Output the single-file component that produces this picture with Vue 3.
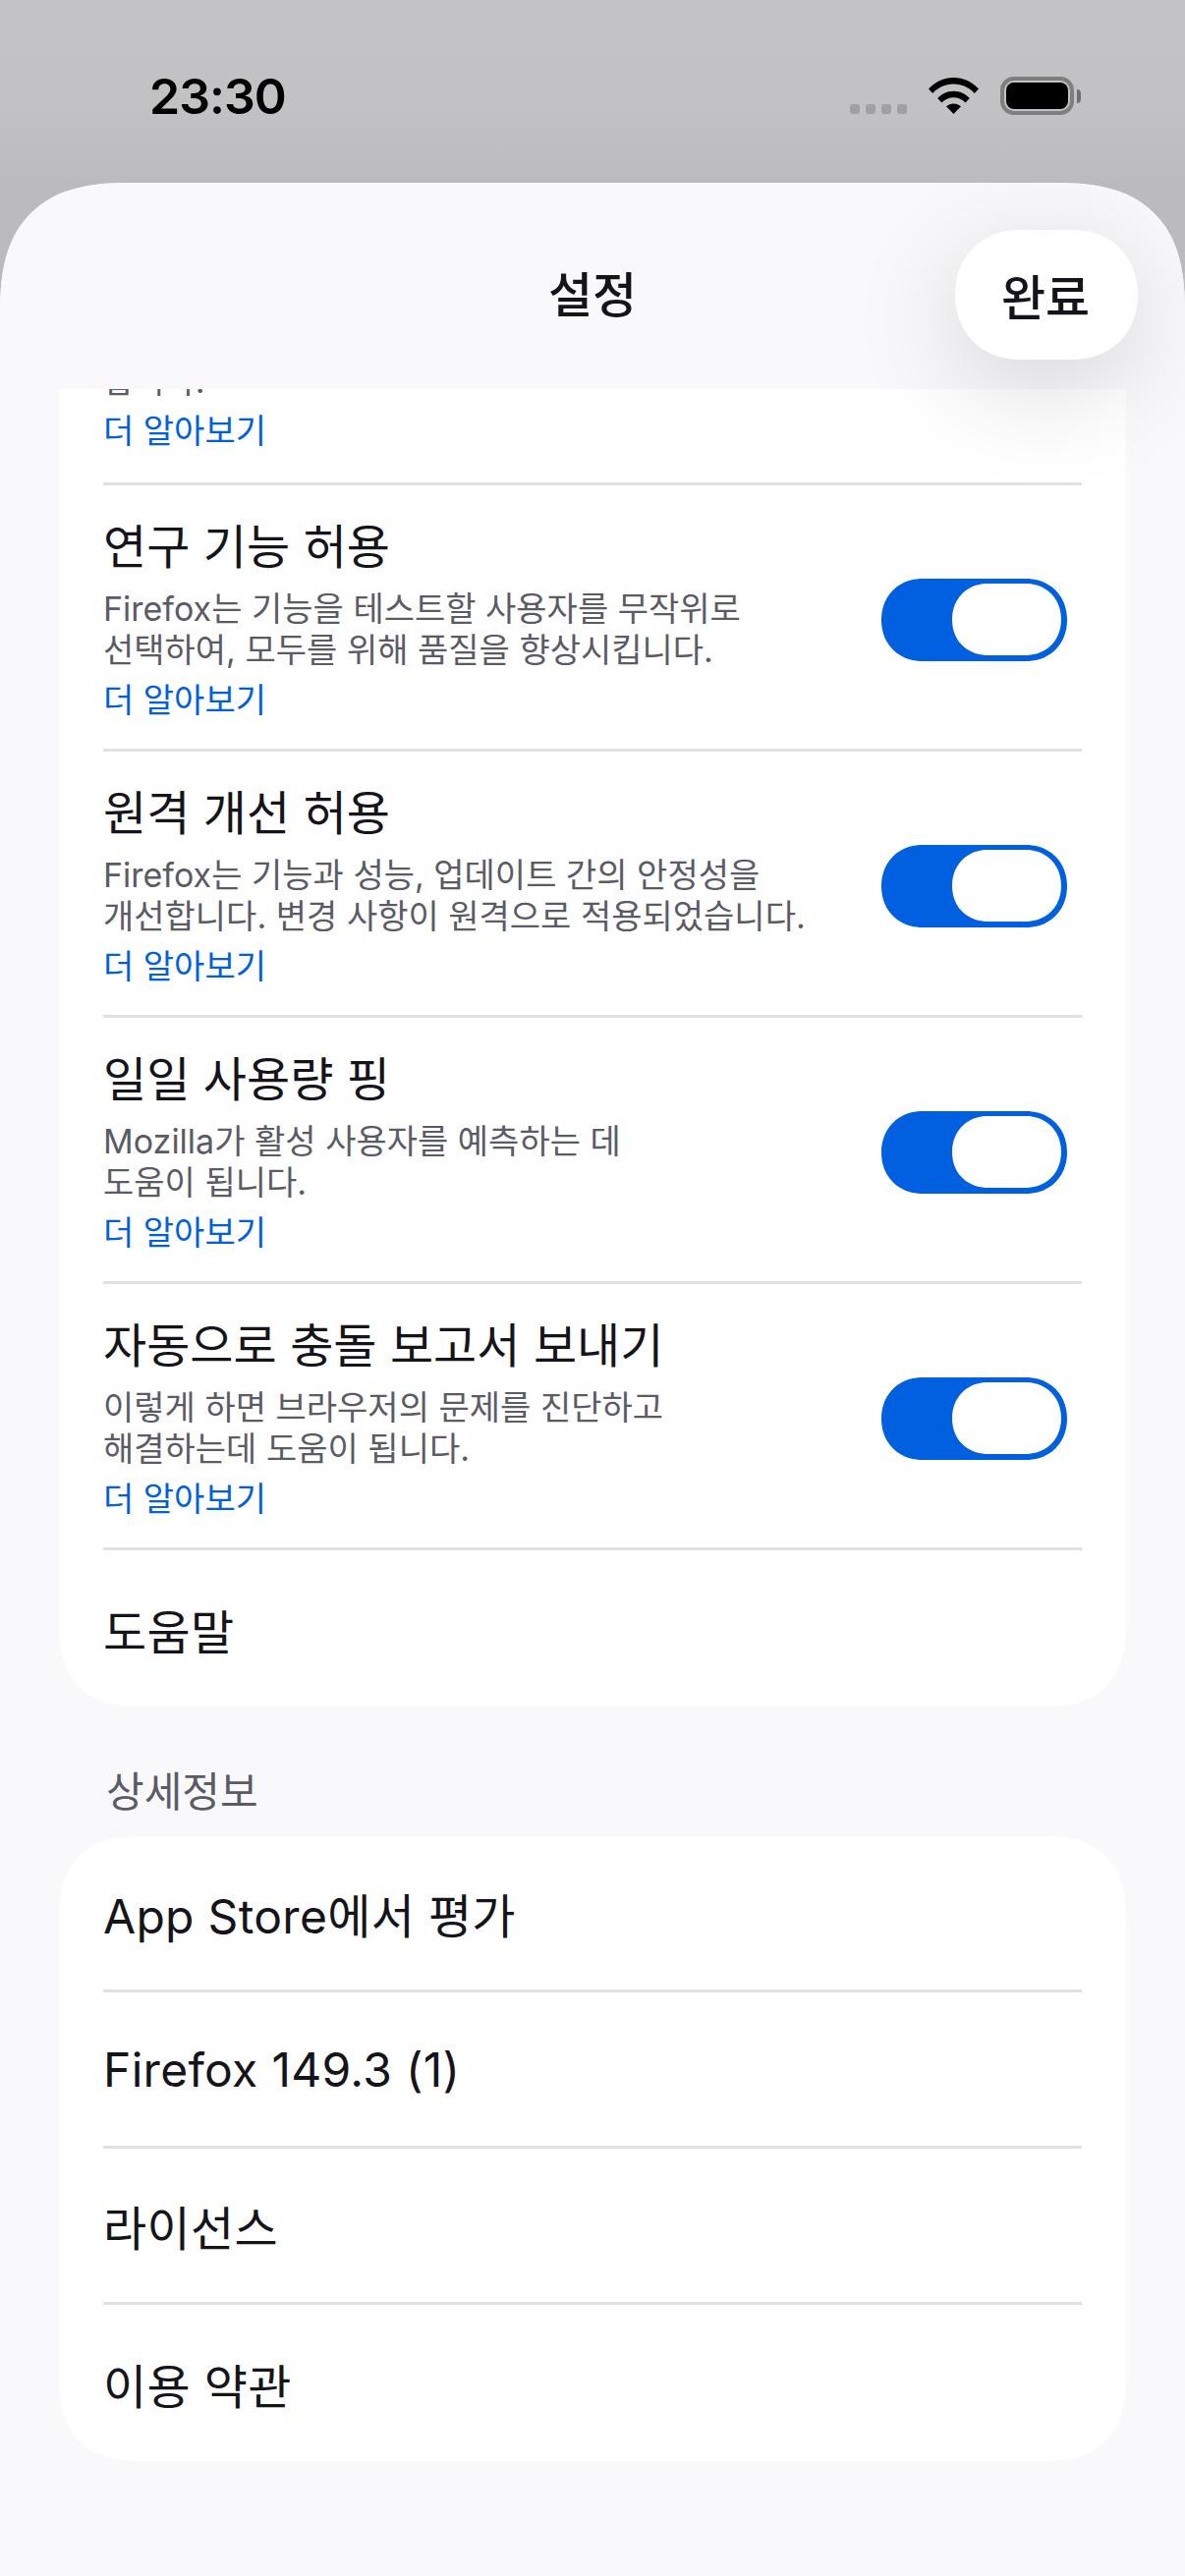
<script setup>
const toggleRows = [
  { title: '연구 기능 허용', desc: 'Firefox는 기능을 테스트할 사용자를 무작위로\n선택하여, 모두를 위해 품질을 향상시킵니다.' },
  { title: '원격 개선 허용', desc: 'Firefox는 기능과 성능, 업데이트 간의 안정성을\n개선합니다. 변경 사항이 원격으로 적용되었습니다.' },
  { title: '일일 사용량 핑', desc: 'Mozilla가 활성 사용자를 예측하는 데\n도움이 됩니다.' },
  { title: '자동으로 충돌 보고서 보내기', desc: '이렇게 하면 브라우저의 문제를 진단하고\n해결하는데 도움이 됩니다.' },
];
const aboutRows = ['App Store에서 평가', 'Firefox 149.3 (1)', '라이선스', '이용 약관'];
</script>

<template>
  <div class="screen">
    <div class="status">
      <span class="time">23:30</span>
      <div class="status-icons">
        <div class="dots"><i></i><i></i><i></i><i></i></div>
        <svg class="wifi" width="51" height="37" viewBox="0 0 51 37">
          <path d="M0 11.5C6.5 4.3 15.5 0 25.5 0S44.500 4.300 51 11.500L46.800 16C41.400 10.200 33.900 6.600 25.500 6.600S9.600 10.200 4.200 16Z" />
          <path d="M9.200 21C13.400 16.500 19.100 13.700 25.500 13.700S37.600 16.500 41.800 21L37.600 25.500C34.400 22.200 30.200 20.200 25.500 20.200S16.600 22.200 13.400 25.500Z" />
          <path d="M18 29.300C20 27.500 22.600 26.400 25.500 26.400S31 27.500 33 29.300L25.500 37Z" />
        </svg>
        <div class="battery">
          <div class="battery-body"><div class="battery-fill"></div></div>
          <div class="battery-nub"></div>
        </div>
      </div>
    </div>

    <div class="sheet">
      <header class="nav">
        <h1>설정</h1>
        <button class="done">완료</button>
      </header>

      <div class="scroll">
        <section class="card first">
          <div class="row">
            <div class="row-text">
              <p class="desc">합니다.</p>
              <a class="more">더 알아보기</a>
            </div>
          </div>
          <div v-for="item in toggleRows" :key="item.title" class="row">
            <div class="row-text">
              <div class="title">{{ item.title }}</div>
              <p class="desc">{{ item.desc }}</p>
              <a class="more">더 알아보기</a>
            </div>
            <div class="toggle"><div class="knob"></div></div>
          </div>
          <div class="row plain">도움말</div>
        </section>

        <h2 class="section-title">상세정보</h2>
        <section class="card">
          <div v-for="label in aboutRows" :key="label" class="row plain">{{ label }}</div>
        </section>
      </div>
    </div>
  </div>
</template>

<style>
html, body {
  margin: 0;
  background: #f9f9fb;
}
</style>

<style scoped>
.screen {
  width: 1206px;
  height: 2622px;
  overflow: hidden;
  display: flex;
  flex-direction: column;
  background: linear-gradient(#c3c3c5 0, #c2c2c4 110px, #bbbbbd 186px);
  font-family: Inter, "Noto Sans CJK KR", sans-serif;
  color: #15141a;
}

.status {
  height: 186px;
  flex-shrink: 0;
  display: flex;
  justify-content: space-between;
  align-items: flex-start;
  padding: 0 106px 0 152px;
  box-sizing: border-box;
}
.time {
  margin-top: 68px;
  font-size: 50px;
  line-height: 60px;
  font-weight: 600;
  letter-spacing: -1px;
  color: #000;
}
.status-icons {
  display: flex;
  align-items: flex-start;
  margin-top: 78px;
}
.dots {
  display: flex;
  gap: 6px;
  margin: 28px 22px 0 0;
}
.dots i {
  display: block;
  width: 10px;
  height: 10px;
  border-radius: 3px;
  background: #a0a0a2;
}
.wifi {
  margin: 1px 22px 0 0;
  fill: #000;
}
.battery {
  display: flex;
  align-items: center;
}
.battery-body {
  width: 75px;
  height: 39px;
  box-sizing: border-box;
  border: 4px solid #7f7f81;
  border-radius: 14px;
  padding: 2px;
}
.battery-fill {
  height: 100%;
  background: #000;
  border-radius: 8px;
}
.battery-nub {
  width: 4px;
  height: 14px;
  margin-left: 3px;
  background: #6f6f71;
  border-radius: 0 7px 7px 0;
}

.sheet {
  flex: 1;
  min-height: 0;
  display: flex;
  flex-direction: column;
  background: #f9f9fb;
  border-radius: 135px 135px 0 0;
  corner-shape: superellipse(1.4);
  overflow: hidden;
}
.nav {
  position: relative;
  z-index: 1;
  height: 210px;
  flex-shrink: 0;
  background: #f9f9fb;
  display: flex;
  align-items: center;
  justify-content: center;
}
h1 {
  margin: 20px 0 0;
  font-size: 49px;
  line-height: 60px;
  font-weight: 500;
}
.done {
  position: absolute;
  top: 48px;
  right: 48px;
  width: 186px;
  height: 132px;
  padding: 0 2px 2px 0;
  border: none;
  border-radius: 66px;
  corner-shape: superellipse(1.08);
  background: #fff;
  color: #15141a;
  font: 500 49px Inter, "Noto Sans CJK KR", sans-serif;
  box-shadow: 0 26px 110px rgba(0, 0, 0, 0.15);
}

.scroll {
  padding: 0 60px;
  min-height: 0;
}
.card {
  background: #fff;
  border-radius: 88px;
  corner-shape: superellipse(1.4);
}
/* scrolled: the top of this card is already under the nav */
.card.first {
  margin-top: -200px;
  padding-top: 171px;
}
.row {
  display: flex;
  align-items: center;
  margin: 0 45px;
  padding-right: 15px;
  border-bottom: 3px solid #e0e0e6;
}
.row:last-child {
  border-bottom: none;
}
.row-text {
  flex: 1;
  padding: 37px 0 28px;
}
.card.first .row:first-child .row-text {
  padding: 0 0 31px;
}
.title {
  font-size: 48px;
  line-height: 52px;
  margin-bottom: 16px;
}
.desc {
  margin: 0;
  font-size: 34px;
  line-height: 42px;
  color: #5b5b66;
  white-space: pre-line;
}
.more {
  display: block;
  margin-top: 9px;
  font-size: 34px;
  line-height: 42px;
  color: #0060df;
}
.toggle {
  width: 189px;
  height: 84px;
  margin-top: 6px;
  box-sizing: border-box;
  padding: 5px 6px 6px;
  display: flex;
  justify-content: flex-end;
  background: #0060df;
  border-radius: 42px;
  corner-shape: superellipse(1.08);
}
.knob {
  width: 111px;
  height: 73px;
  background: #fff;
  border-radius: 37px;
  corner-shape: superellipse(1.08);
}
.plain {
  height: 159px;
  box-sizing: border-box;
  font-size: 48px;
  letter-spacing: 0.3px;
}
.section-title {
  margin: 0;
  padding: 63px 0 21px 48px;
  font-size: 42px;
  line-height: 48px;
  font-weight: 400;
  color: #5b5b66;
}
</style>
